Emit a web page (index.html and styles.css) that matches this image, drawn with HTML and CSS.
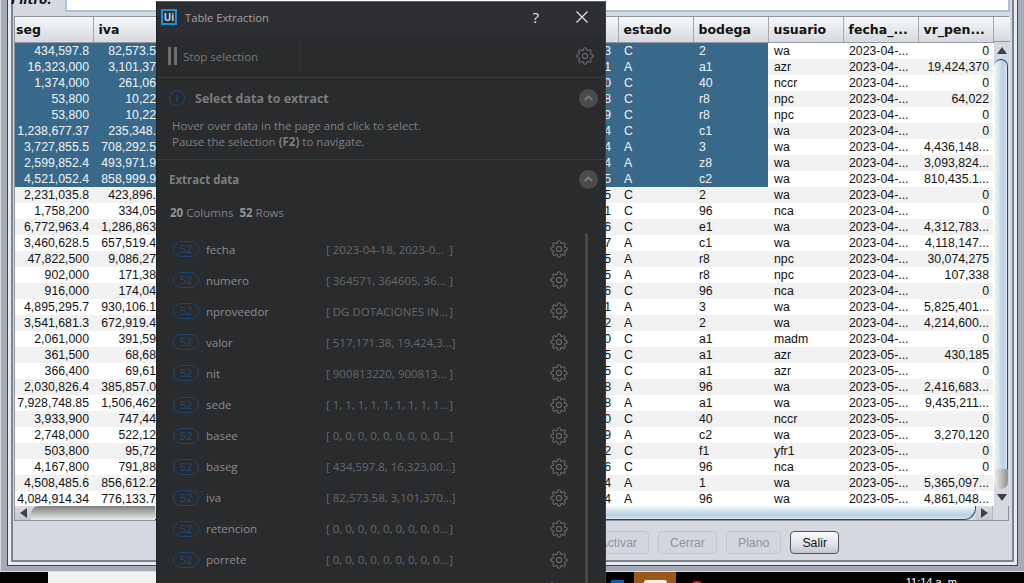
FILE: index.html
```html
<!DOCTYPE html>
<html lang="es">

<head>
    <meta charset="UTF-8">
    <meta name="viewport" content="width=device-width, initial-scale=1.0">
    <title>Table Extraction</title>
    <link rel="stylesheet" href="styles.css">
</head>

<body>

    <svg class="defs" width="0" height="0">
        <symbol id="gear" viewBox="0 0 24 24">
            <circle cx="12" cy="12" r="3.4"></circle>
            <path d="M19.4 15a1.65 1.65 0 0 0 .33 1.82l.06.06a2 2 0 0 1 0 2.83 2 2 0 0 1-2.83 0l-.06-.06a1.65 1.65 0 0 0-1.82-.33 1.65 1.65 0 0 0-1 1.51V21a2 2 0 0 1-2 2 2 2 0 0 1-2-2v-.09A1.65 1.65 0 0 0 9 19.4a1.65 1.65 0 0 0-1.82.33l-.06.06a2 2 0 0 1-2.83 0 2 2 0 0 1 0-2.83l.06-.06a1.65 1.65 0 0 0 .33-1.82 1.65 1.65 0 0 0-1.51-1H3a2 2 0 0 1-2-2 2 2 0 0 1 2-2h.09A1.65 1.65 0 0 0 4.6 9a1.65 1.65 0 0 0-.33-1.82l-.06-.06a2 2 0 0 1 0-2.83 2 2 0 0 1 2.83 0l.06.06a1.65 1.65 0 0 0 1.82.33H9a1.65 1.65 0 0 0 1-1.51V3a2 2 0 0 1 2-2 2 2 0 0 1 2 2v.09a1.65 1.65 0 0 0 1 1.51 1.65 1.65 0 0 0 1.82-.33l.06-.06a2 2 0 0 1 2.83 0 2 2 0 0 1 0 2.83l-.06.06a1.65 1.65 0 0 0-.33 1.82V9a1.65 1.65 0 0 0 1.51 1H21a2 2 0 0 1 2 2 2 2 0 0 1-2 2h-.09a1.65 1.65 0 0 0-1.51 1z"></path>
        </symbol>
        <symbol id="chevron" viewBox="0 0 18 18">
            <path d="M5.5 10.5 9 7l3.5 3.5"></path>
        </symbol>
    </svg>

    <div class="frame">
        <div class="frame-inner">
            <div class="panel">
                <div class="filter">
                    <label class="filter-label" for="filtro">Filtro:</label>
                    <input class="filter-input" type="text" id="filtro">
                </div>

                <div class="grid-box">
                    <div class="grid-main">
                        <table class="grid">
                            <colgroup>
                                <col class="col-seg">
                                <col class="col-std">
                                <col class="col-mid">
                                <col class="col-std">
                                <col class="col-std">
                                <col class="col-std">
                                <col class="col-std">
                                <col class="col-std">
                            </colgroup>
                            <thead>
                                <tr>
                                    <th class="th-seg">seg</th>
                                    <th>iva</th>
                                    <th></th>
                                    <th>estado</th>
                                    <th>bodega</th>
                                    <th>usuario</th>
                                    <th>fecha_...</th>
                                    <th>vr_pen...</th>
                                </tr>
                            </thead>
                            <tbody>
                                <tr class="sel"><td class="num">434,597.8</td><td class="cut">82,573.5</td><td class="mid">3</td><td>C</td><td>2</td><td>wa</td><td>2023-04-...</td><td class="num">0</td></tr>
                                <tr class="sel"><td class="num">16,323,000</td><td class="cut">3,101,37</td><td class="mid">1</td><td>A</td><td>a1</td><td>azr</td><td>2023-04-...</td><td class="num">19,424,370</td></tr>
                                <tr class="sel"><td class="num">1,374,000</td><td class="cut">261,06</td><td class="mid">0</td><td>C</td><td>40</td><td>nccr</td><td>2023-04-...</td><td class="num">0</td></tr>
                                <tr class="sel"><td class="num">53,800</td><td class="cut">10,22</td><td class="mid">8</td><td>C</td><td>r8</td><td>npc</td><td>2023-04-...</td><td class="num">64,022</td></tr>
                                <tr class="sel"><td class="num">53,800</td><td class="cut">10,22</td><td class="mid">9</td><td>C</td><td>r8</td><td>npc</td><td>2023-04-...</td><td class="num">0</td></tr>
                                <tr class="sel"><td class="num">1,238,677.37</td><td class="cut">235,348.</td><td class="mid">4</td><td>C</td><td>c1</td><td>wa</td><td>2023-04-...</td><td class="num">0</td></tr>
                                <tr class="sel"><td class="num">3,727,855.5</td><td class="cut">708,292.5</td><td class="mid">4</td><td>A</td><td>3</td><td>wa</td><td>2023-04-...</td><td class="num">4,436,148...</td></tr>
                                <tr class="sel"><td class="num">2,599,852.4</td><td class="cut">493,971.9</td><td class="mid">4</td><td>A</td><td>z8</td><td>wa</td><td>2023-04-...</td><td class="num">3,093,824...</td></tr>
                                <tr class="sel"><td class="num">4,521,052.4</td><td class="cut">858,999.9</td><td class="mid">5</td><td>A</td><td>c2</td><td>wa</td><td>2023-04-...</td><td class="num">810,435.1...</td></tr>
                                <tr><td class="num">2,231,035.8</td><td class="cut">423,896.</td><td class="mid">5</td><td>C</td><td>2</td><td>wa</td><td>2023-04-...</td><td class="num">0</td></tr>
                                <tr><td class="num">1,758,200</td><td class="cut">334,05</td><td class="mid">1</td><td>C</td><td>96</td><td>nca</td><td>2023-04-...</td><td class="num">0</td></tr>
                                <tr><td class="num">6,772,963.4</td><td class="cut">1,286,863</td><td class="mid">6</td><td>C</td><td>e1</td><td>wa</td><td>2023-04-...</td><td class="num">4,312,783...</td></tr>
                                <tr><td class="num">3,460,628.5</td><td class="cut">657,519.4</td><td class="mid">7</td><td>A</td><td>c1</td><td>wa</td><td>2023-04-...</td><td class="num">4,118,147...</td></tr>
                                <tr><td class="num">47,822,500</td><td class="cut">9,086,27</td><td class="mid">5</td><td>A</td><td>r8</td><td>npc</td><td>2023-04-...</td><td class="num">30,074,275</td></tr>
                                <tr><td class="num">902,000</td><td class="cut">171,38</td><td class="mid">5</td><td>A</td><td>r8</td><td>npc</td><td>2023-04-...</td><td class="num">107,338</td></tr>
                                <tr><td class="num">916,000</td><td class="cut">174,04</td><td class="mid">6</td><td>C</td><td>96</td><td>nca</td><td>2023-04-...</td><td class="num">0</td></tr>
                                <tr><td class="num">4,895,295.7</td><td class="cut">930,106.1</td><td class="mid">1</td><td>A</td><td>3</td><td>wa</td><td>2023-04-...</td><td class="num">5,825,401...</td></tr>
                                <tr><td class="num">3,541,681.3</td><td class="cut">672,919.4</td><td class="mid">2</td><td>A</td><td>2</td><td>wa</td><td>2023-04-...</td><td class="num">4,214,600...</td></tr>
                                <tr><td class="num">2,061,000</td><td class="cut">391,59</td><td class="mid">0</td><td>C</td><td>a1</td><td>madm</td><td>2023-04-...</td><td class="num">0</td></tr>
                                <tr><td class="num">361,500</td><td class="cut">68,68</td><td class="mid">5</td><td>C</td><td>a1</td><td>azr</td><td>2023-05-...</td><td class="num">430,185</td></tr>
                                <tr><td class="num">366,400</td><td class="cut">69,61</td><td class="mid">5</td><td>C</td><td>a1</td><td>azr</td><td>2023-05-...</td><td class="num">0</td></tr>
                                <tr><td class="num">2,030,826.4</td><td class="cut">385,857.0</td><td class="mid">8</td><td>A</td><td>96</td><td>wa</td><td>2023-05-...</td><td class="num">2,416,683...</td></tr>
                                <tr><td class="num">7,928,748.85</td><td class="cut">1,506,462</td><td class="mid">8</td><td>A</td><td>a1</td><td>wa</td><td>2023-05-...</td><td class="num">9,435,211...</td></tr>
                                <tr><td class="num">3,933,900</td><td class="cut">747,44</td><td class="mid">0</td><td>C</td><td>40</td><td>nccr</td><td>2023-05-...</td><td class="num">0</td></tr>
                                <tr><td class="num">2,748,000</td><td class="cut">522,12</td><td class="mid">9</td><td>A</td><td>c2</td><td>wa</td><td>2023-05-...</td><td class="num">3,270,120</td></tr>
                                <tr><td class="num">503,800</td><td class="cut">95,72</td><td class="mid">2</td><td>C</td><td>f1</td><td>yfr1</td><td>2023-05-...</td><td class="num">0</td></tr>
                                <tr><td class="num">4,167,800</td><td class="cut">791,88</td><td class="mid">6</td><td>C</td><td>96</td><td>nca</td><td>2023-05-...</td><td class="num">0</td></tr>
                                <tr><td class="num">4,508,485.6</td><td class="cut">856,612.2</td><td class="mid">4</td><td>A</td><td>1</td><td>wa</td><td>2023-05-...</td><td class="num">5,365,097...</td></tr>
                                <tr><td class="num">4,084,914.34</td><td class="cut">776,133.7</td><td class="mid">4</td><td>A</td><td>96</td><td>wa</td><td>2023-05-...</td><td class="num">4,861,048...</td></tr>
                            </tbody>
                        </table>

                        <div class="vscroll">
                            <div class="vscroll-head"></div>
                            <div class="arrow-btn"><span class="tri tri-up"></span></div>
                            <div class="vthumb"></div>
                            <div class="vend"></div>
                            <div class="arrow-btn"><span class="tri tri-down"></span></div>
                        </div>
                    </div>

                    <div class="hscroll">
                        <div class="arrow-btn"><span class="tri tri-left"></span></div>
                        <div class="hstart"></div>
                        <div class="hthumb"></div>
                        <div class="arrow-btn"><span class="tri tri-right"></span></div>
                        <div class="corner"></div>
                    </div>
                </div>

                <div class="actions">
                    <button class="btn" disabled>Activar</button>
                    <button class="btn" disabled>Cerrar</button>
                    <button class="btn" disabled>Plano</button>
                    <button class="btn btn-on">Salir</button>
                </div>
            </div>
        </div>
    </div>

    <div class="taskbar">
        <div class="task-start"></div>
        <div class="task-search"></div>
        <div class="task-apps">
            <span class="app-blue"></span>
            <span class="app-orange"><span class="app-orange-in"></span></span>
            <span class="app-red"></span>
            <span class="clock">11:14 a. m.</span>
        </div>
    </div>

    <!-- Dialogo sobre la ventana -->
    <div class="dialog">
        <div class="dlg-title">
            <span class="logo">Ui</span>
            <span class="dlg-name">Table Extraction</span>
            <span class="dlg-help">?</span>
            <svg class="dlg-close" viewBox="0 0 12 12"><path d="M.5.5l11 11M11.5.5l-11 11"></path></svg>
        </div>

        <div class="toolbar">
            <span class="pause"></span>
            <span class="stop">Stop selection</span>
            <span class="tool-sep"></span>
            <svg class="gear gear-top"><use href="#gear"></use></svg>
        </div>

        <div class="section">
            <div class="sec-head">
                <span class="info">i</span>
                <span class="sec-title">Select data to extract</span>
                <svg class="toggle"><use href="#chevron"></use></svg>
            </div>
            <p class="sec-text">Hover over data in the page and click to select.<br>Pause the selection <b>(F2)</b> to navigate.</p>
        </div>

        <div class="extract">
            <div class="ext-head">
                <span class="ext-title">Extract data</span>
                <svg class="toggle"><use href="#chevron"></use></svg>
            </div>
            <div class="counts"><b>20</b> Columns &nbsp;<b>52</b> Rows</div>
            <div class="fields">
                <div class="field"><span class="badge">52</span><span class="fname">fecha</span><span class="fval">[ 2023-04-18, 2023-0... <i>]</i></span><svg class="gear"><use href="#gear"></use></svg></div>
                <div class="field"><span class="badge">52</span><span class="fname">numero</span><span class="fval">[ 364571, 364605, 36... <i>]</i></span><svg class="gear"><use href="#gear"></use></svg></div>
                <div class="field"><span class="badge">52</span><span class="fname">nproveedor</span><span class="fval">[ DG DOTACIONES IN... <i>]</i></span><svg class="gear"><use href="#gear"></use></svg></div>
                <div class="field"><span class="badge">52</span><span class="fname">valor</span><span class="fval">[ 517,171.38, 19,424,3... <i>]</i></span><svg class="gear"><use href="#gear"></use></svg></div>
                <div class="field"><span class="badge">52</span><span class="fname">nit</span><span class="fval">[ 900813220, 900813... <i>]</i></span><svg class="gear"><use href="#gear"></use></svg></div>
                <div class="field"><span class="badge">52</span><span class="fname">sede</span><span class="fval">[ 1, 1, 1, 1, 1, 1, 1, 1, 1... <i>]</i></span><svg class="gear"><use href="#gear"></use></svg></div>
                <div class="field"><span class="badge">52</span><span class="fname">basee</span><span class="fval">[ 0, 0, 0, 0, 0, 0, 0, 0, 0... <i>]</i></span><svg class="gear"><use href="#gear"></use></svg></div>
                <div class="field"><span class="badge">52</span><span class="fname">baseg</span><span class="fval">[ 434,597.8, 16,323,00... <i>]</i></span><svg class="gear"><use href="#gear"></use></svg></div>
                <div class="field"><span class="badge">52</span><span class="fname">iva</span><span class="fval">[ 82,573.58, 3,101,370... <i>]</i></span><svg class="gear"><use href="#gear"></use></svg></div>
                <div class="field"><span class="badge">52</span><span class="fname">retencion</span><span class="fval">[ 0, 0, 0, 0, 0, 0, 0, 0, 0... <i>]</i></span><svg class="gear"><use href="#gear"></use></svg></div>
                <div class="field"><span class="badge">52</span><span class="fname">porrete</span><span class="fval">[ 0, 0, 0, 0, 0, 0, 0, 0, 0... <i>]</i></span><svg class="gear"><use href="#gear"></use></svg></div>
                <div class="field"><span class="badge"></span><svg class="gear gear-last"><use href="#gear"></use></svg></div>
                <div class="fields-bar"></div>
            </div>
        </div>
    </div>

</body>

</html>
```

FILE: styles.css
```css
html,
body {
    margin: 0;
    padding: 0;
    height: 583px;
    overflow: hidden;
    background-color: #000000;
    font-family: "Liberation Sans", Arial, sans-serif;
}

.defs {
    position: absolute;
}

/* Ventana de fondo */
.frame {
    box-sizing: border-box;
    height: 572px;
    padding: 0 6px 5px 1px;
    background-color: #a3abb7;
    border-left: 1px solid #d8dbe0;
    border-bottom: 1px solid #d8dbe0;
}

.frame-inner {
    box-sizing: border-box;
    height: 100%;
    padding: 0 3px 3px 3px;
    margin-left: 5px;
    background-color: #e8ebf0;
    border: 1px solid #3f434a;
    border-top: none;
}

.panel {
    display: flex;
    flex-direction: column;
    box-sizing: border-box;
    height: 100%;
    padding: 0 1px 0 1px;
    background-color: #d5d8e0;
    border: 2px solid #7d838e;
    border-top: none;
}

.filter {
    display: flex;
    flex: none;
    height: 22px;
    margin-top: -10px;
    margin-bottom: 4px;
}

.filter-label {
    width: 54px;
    margin: 3px 0 0 -3px;
    font-family: "DejaVu Sans", sans-serif;
    font-size: 12px;
    font-weight: bold;
    font-style: italic;
    color: #111111;
}

.filter-input {
    box-sizing: border-box;
    flex: 1;
    height: 22px;
    margin-right: 1px;
    border: 2px solid #a9c3dc;
    background-color: #ffffff;
}

.grid-box {
    flex: none;
    height: 505px;
    border: 1px solid #8f949c;
    background-color: #ffffff;
    width: 995px;
    box-sizing: border-box;
}

.grid-main {
    display: flex;
    height: 489px;
}

/* Tabla */
.grid {
    table-layout: fixed;
    width: 978px;
    flex: none;
    border-collapse: collapse;
    font-size: 12.3px;
    color: #111111;
}

.col-seg {
    width: 78px;
}

.col-std {
    width: 75px;
}

.col-mid {
    width: 450px;
}

th {
    height: 25px;
    padding: 0 0 0 5px;
    box-sizing: border-box;
    text-align: left;
    font-family: "DejaVu Sans", sans-serif;
    font-size: 12.5px;
    background: linear-gradient(#f6f7f9, #d7d9de);
    border-right: 1px solid #a4a8b0;
    border-bottom: 1px solid #9299a3;
}

.th-seg {
    padding-left: 1px;
}

td {
    height: 16px;
    padding: 0 4px 0 6px;
    box-sizing: border-box;
    line-height: 16px;
    white-space: nowrap;
    overflow: hidden;
}

tbody tr:nth-child(even) {
    background-color: #f2f2f2;
}

.num {
    padding-left: 0;
    text-align: right;
}

.cut {
    padding-right: 12px;
    text-align: right;
}

.mid {
    padding-right: 7px;
    text-align: right;
}

.sel td:nth-child(-n+5) {
    background-color: #38688a;
    color: #f2f6fa;
}

/* Barras de desplazamiento */
.vscroll {
    display: flex;
    flex-direction: column;
    width: 16px;
    flex: none;
    background-color: #d5d8e0;
}

.vscroll-head {
    height: 25px;
    background: linear-gradient(#f6f7f9, #d7d9de);
    border-bottom: 1px solid #9299a3;
    box-sizing: border-box;
}

.arrow-btn {
    display: flex;
    align-items: center;
    justify-content: center;
    width: 16px;
    height: 17px;
    flex: none;
}

.vthumb {
    flex: 1;
    margin-right: 2px;
    border-radius: 12px 12px 0 0;
    border-top: 1px solid #2f4a63;
    border-right: 1px solid #2f4a63;
    background: linear-gradient(90deg, #f4f8fb, #b9d0e3 70%, #d8e5ef);
}

.vend {
    height: 20px;
    flex: none;
    margin-right: 2px;
    border-radius: 0 0 8px 8px;
    background: linear-gradient(90deg, #f2f2f2, #8f8f8f);
}

.hscroll {
    display: flex;
    height: 14px;
    background-color: #d5d8e0;
}

.hstart {
    width: 124px;
    flex: none;
    border-radius: 8px 0 0 0;
    background: linear-gradient(#7e7e7e, #ececec);
}

.hthumb {
    flex: 1;
    border-radius: 0 0 12px 0;
    border-bottom: 1px solid #2f4a63;
    border-right: 1px solid #2f4a63;
    background: linear-gradient(#f4f8fb, #b9d0e3 70%, #d8e5ef);
}

.hscroll .arrow-btn {
    height: 14px;
    background: linear-gradient(#d9dbe0, #c4c7cd);
}

.corner {
    width: 16px;
    flex: none;
    border-left: 1px solid #b5b9c1;
    box-sizing: border-box;
}

.tri {
    display: block;
    width: 0;
    height: 0;
    border: 5px solid transparent;
}

.tri-up {
    border-top: none;
    border-bottom: 7px solid #3d4046;
}

.tri-down {
    border-bottom: none;
    border-top: 7px solid #3d4046;
}

.tri-left {
    border-left: none;
    border-right: 7px solid #3d4046;
}

.tri-right {
    border-right: none;
    border-left: 7px solid #3d4046;
}

/* Botones */
.actions {
    display: flex;
    justify-content: flex-end;
    gap: 9px;
    margin-top: 10px;
    padding-right: 172px;
}

.btn {
    box-sizing: border-box;
    height: 23px;
    min-width: 48px;
    padding: 0 11px;
    border: 1px solid #c2c6ce;
    border-radius: 4px;
    background-color: #d3d6de;
    font-family: "Liberation Sans", Arial, sans-serif;
    font-size: 12.3px;
    color: #92959c;
}

.btn-on {
    border-color: #50555e;
    background: linear-gradient(#fafbfc, #dfe2e8 60%, #c3c7cf);
    color: #111111;
}

/* Barra de tareas */
.taskbar {
    display: flex;
    height: 11px;
    overflow: hidden;
}

.task-start {
    width: 48px;
    flex: none;
}

.task-search {
    width: 558px;
    flex: none;
    background-color: #f0f0f0;
}

.task-apps {
    position: relative;
    display: flex;
    flex: 1;
    color: #ffffff;
}

.app-blue {
    width: 13px;
    height: 3px;
    margin: 8px 0 0 5px;
    background-color: #0d5fa6;
}

.app-orange {
    display: flex;
    justify-content: center;
    width: 42px;
    height: 11px;
    margin-left: 10px;
    background-color: #9a5a1e;
}

.app-orange-in {
    width: 23px;
    height: 3px;
    margin-top: 8px;
    border-radius: 3px 3px 0 0;
    background-color: #f2f2f2;
}

.app-red {
    width: 14px;
    height: 14px;
    margin: 9px 0 0 14px;
    border-radius: 50%;
    background-color: #d9301f;
}

.clock {
    margin: 3px 0 0 auto;
    padding-right: 64px;
    font-size: 11px;
    line-height: 14px;
}

/* Dialogo */
.dialog {
    position: absolute;
    left: 156px;
    top: 1px;
    width: 450px;
    height: 582px;
    box-sizing: border-box;
    border-top: 1px solid #5c5d5f;
    border-right: 1px solid #3c3d3f;
    border-left: 1px solid #202123;
    background-color: #2a2b2d;
    font-family: "Open Sans", sans-serif;
    overflow: hidden;
}

.dlg-title {
    display: flex;
    align-items: center;
    height: 33px;
    box-sizing: border-box;
    padding: 0 17px 3px 4px;
    background-color: #2d2e31;
}

.logo {
    box-sizing: border-box;
    width: 16px;
    height: 16px;
    border: 2px solid #1d8de0;
    font-size: 10px;
    font-weight: bold;
    line-height: 12px;
    text-align: center;
    color: #b8d6ee;
}

.dlg-name {
    flex: 1;
    margin-left: 8px;
    font-size: 11.2px;
    color: #a0a2a5;
}

.dlg-help {
    margin-right: 37px;
    font-size: 15px;
    color: #e4e4e4;
}

.dlg-close {
    width: 12px;
    height: 12px;
    fill: none;
    stroke: #e8e8e8;
    stroke-width: 1.1;
}

.toolbar {
    display: flex;
    align-items: center;
    height: 43px;
    box-sizing: border-box;
    padding: 0 11px 0 11px;
    border-bottom: 1px solid #3a3b3d;
}

.pause {
    width: 3px;
    height: 18px;
    border-left: 3px solid #6c6d6f;
    border-right: 3px solid #6c6d6f;
    box-sizing: content-box;
}

.stop {
    width: 117px;
    margin-left: 6px;
    font-size: 11.5px;
    color: #77787a;
}

.tool-sep {
    width: 1px;
    height: 32px;
    background-color: #333436;
}

.gear {
    width: 18px;
    height: 18px;
    flex: none;
    fill: none;
    stroke: #6a6b6d;
    stroke-width: 1.5;
}

.gear-top {
    margin-left: auto;
}

.section {
    height: 82px;
    box-sizing: border-box;
    border-bottom: 1px solid #3a3b3d;
}

.sec-head {
    display: flex;
    align-items: center;
    height: 40px;
    padding: 0 7px 0 12px;
}

.info {
    box-sizing: border-box;
    width: 16px;
    height: 16px;
    border: 1px solid #1c4a78;
    border-radius: 50%;
    font-size: 10px;
    line-height: 14px;
    text-align: center;
    color: #1f5080;
}

.sec-title {
    flex: 1;
    margin-left: 10px;
    font-size: 12.5px;
    font-weight: bold;
    color: #7a7b7d;
}

.toggle {
    width: 19px;
    height: 19px;
    flex: none;
    border-radius: 50%;
    background-color: #4a4b4d;
    fill: none;
    stroke: #77787a;
    stroke-width: 2;
}

.sec-text {
    margin: 0;
    padding: 0 15px;
    font-size: 11.5px;
    line-height: 16px;
    color: #7e7f81;
}

.extract {
    position: relative;
}

.ext-head {
    display: flex;
    align-items: center;
    justify-content: space-between;
    height: 39px;
    padding: 0 7px 0 12px;
}

.ext-title {
    font-size: 11.5px;
    font-weight: bold;
    color: #7e7f81;
}

.counts {
    height: 34.5px;
    padding: 6px 0 0 13px;
    box-sizing: border-box;
    font-size: 11.5px;
    color: #808183;
}

.counts b {
    color: #929395;
}

.fields {
    position: relative;
}

.field {
    display: flex;
    align-items: center;
    height: 31.1px;
    padding-left: 16px;
}

.badge {
    box-sizing: border-box;
    width: 26px;
    height: 16px;
    flex: none;
    border: 1px solid #1b4673;
    border-radius: 8px;
    font-size: 11.5px;
    line-height: 13px;
    text-align: center;
    color: #1f4a78;
}

.fname {
    width: 120px;
    flex: none;
    margin-left: 7px;
    font-size: 11.5px;
    color: #8b8c90;
}

.fval {
    display: flex;
    justify-content: space-between;
    width: 127px;
    flex: none;
    font-size: 11.5px;
    white-space: nowrap;
    color: #666769;
}

.fval i {
    font-style: normal;
}

.field .gear {
    margin-left: 97px;
}

.field .gear-last {
    margin-left: 344px;
}

.fields-bar {
    position: absolute;
    left: 428px;
    top: -1px;
    width: 3px;
    height: 360px;
    border-radius: 2px;
    background-color: #48494b;
}
```
